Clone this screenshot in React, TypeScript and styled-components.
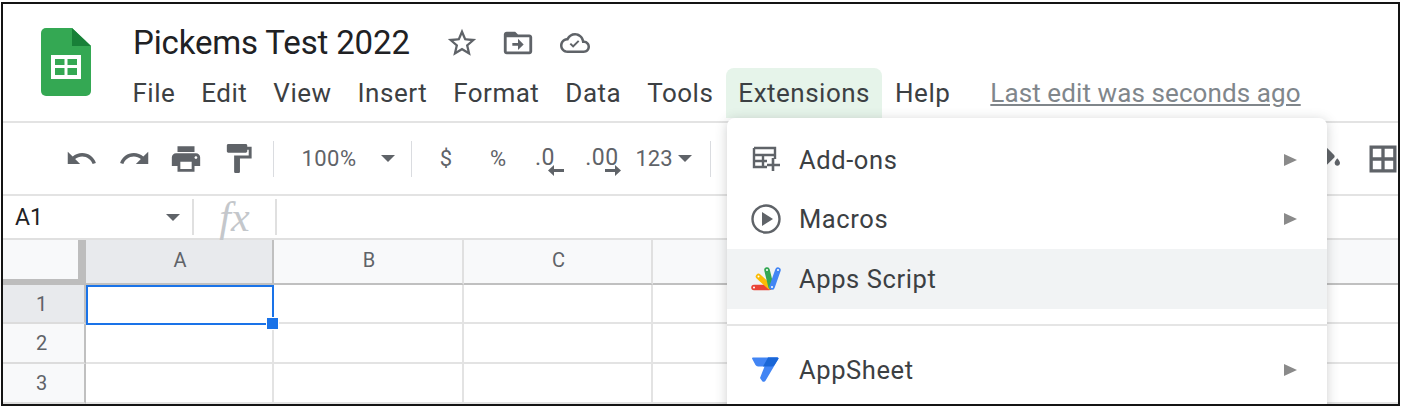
import React from 'react';
import styled, { createGlobalStyle } from 'styled-components';

const GlobalStyle = createGlobalStyle`
  html, body {
    margin: 0;
    padding: 0;
    background: #fff;
  }
  body {
    font-family: Roboto, "Liberation Sans", sans-serif;
  }
`;

const Frame = styled.div`
  position: relative;
  box-sizing: border-box;
  width: 1399px;
  height: 404px;
  margin: 2px 0 0 1px;
  border: 2px solid #141414;
  overflow: hidden;
  display: flex;
  flex-direction: column;
`;

const Header = styled.header`
  flex: none;
  height: 117px;
  box-sizing: content-box;
  display: flex;
  border-bottom: 2px solid #e3e3e3;
`;

const LogoSlot = styled.div`
  flex: none;
  width: 87px;
  padding: 24px 0 0 38px;
  box-sizing: content-box;
`;

const TitleColumn = styled.div`
  display: flex;
  flex-direction: column;
`;

const TitleRow = styled.div`
  display: flex;
  align-items: center;
  box-sizing: border-box;
  height: 62px;
  padding: 15px 0 0 5px;
`;

const DocTitle = styled.div`
  font-size: 33px;
  letter-spacing: -0.15px;
  color: #202124;
  width: 312px;
  white-space: nowrap;
`;

const TitleIcons = styled.div`
  display: flex;
  align-items: center;
  gap: 22px;
  color: #5f6368;

  svg:last-child {
    margin-left: 3px;
  }
`;

const MenuBar = styled.nav`
  display: flex;
  align-items: center;
  height: 50px;
  margin-left: -8.5px;
  margin-top: 2px;
`;

const MenuLabel = styled.div<{ $open?: boolean }>`
  height: 50px;
  line-height: 50px;
  padding: 0 12px;
  margin: 0 ${p => (p.$open ? '0' : '1')}px;
  font-size: 26px;
  letter-spacing: 0.5px;
  color: #3c4043;
  white-space: nowrap;
  border-radius: 8px 8px 0 0;
  background: ${p => (p.$open ? '#e6f4ea' : 'transparent')};
`;

const LastEdit = styled.div`
  margin-left: 27px;
  font-size: 26px;
  letter-spacing: 0.1px;
  color: #80868b;
  text-decoration: underline;
  white-space: nowrap;
`;

const Toolbar = styled.div`
  flex: none;
  height: 71px;
  display: flex;
  align-items: center;
  padding-left: 60px;
  border-bottom: 2px solid #e3e3e3;
  color: #5f6368;
`;

const Tool = styled.div<{ $w: number }>`
  flex: none;
  width: ${p => p.$w}px;
  display: flex;
  align-items: center;
  justify-content: center;
  gap: 5px;
  font-size: 22px;
  color: #5f6368;
`;

const ToolDivider = styled.div`
  flex: none;
  width: 1px;
  height: 36px;
  background: #dadce0;
`;

const ZoomValue = styled(Tool)`
  letter-spacing: 0.5px;
`;

const Decimal = styled.div`
  position: relative;
  font-size: 23px;
  line-height: 26px;
  height: 26px;
  letter-spacing: 0.5px;
  margin-top: -2px;
`;

const DecimalArrow = styled.svg<{ $right?: boolean }>`
  position: absolute;
  top: 19px;
  ${p => (p.$right ? 'right: -2px;' : 'right: -9px;')}
`;

const ToolbarEnd = styled.div`
  margin-left: auto;
  margin-right: -3px;
  display: flex;
  align-items: center;
  gap: 21px;
  color: #5f6368;
`;

const FormulaBar = styled.div`
  flex: none;
  height: 42px;
  display: flex;
  align-items: center;
  border-bottom: 2px solid #e0e0e0;
`;

const CellName = styled.div`
  flex: none;
  width: 189px;
  padding: 0 12px;
  box-sizing: border-box;
  display: flex;
  align-items: center;
  justify-content: space-between;
  font-size: 23px;
  color: #202124;
`;

const Caret = styled.span<{ $size?: number }>`
  display: inline-block;
  width: 0;
  height: 0;
  border-left: ${p => p.$size ?? 7}px solid transparent;
  border-right: ${p => p.$size ?? 7}px solid transparent;
  border-top: ${p => p.$size ?? 7}px solid #5f6368;
`;

const FormulaDivider = styled.div`
  flex: none;
  width: 2px;
  height: 36px;
  background: #e0e0e0;
`;

const Fx = styled.div`
  flex: none;
  width: 81px;
  text-align: center;
  font-family: "Liberation Serif", serif;
  font-style: italic;
  font-size: 42px;
  line-height: 36px;
  color: #c4c7cb;
`;

const Sheet = styled.div`
  flex: 1;
  display: grid;
  grid-template-columns: 83px 188px 190px 189px 189px 189px 189px 189px;
  grid-template-rows: 45px 39px 40px 40px;
  overflow: hidden;
`;

const Corner = styled.div`
  background: #f8f9fa;
  border-right: 8px solid #bdbdbd;
  border-bottom: 6px solid #bdbdbd;
  box-sizing: border-box;
`;

const ColumnHead = styled.div<{ $active?: boolean }>`
  display: flex;
  align-items: center;
  justify-content: center;
  box-sizing: border-box;
  padding: 0 0 4px 2px;
  font-size: 20px;
  color: #5f6368;
  background: ${p => (p.$active ? '#e8eaed' : '#f8f9fa')};
  border-right: 2px solid ${p => (p.$active ? '#c0c0c0' : '#e0e0e0')};
  border-bottom: 2px solid #c0c0c0;
`;

const RowHead = styled.div<{ $active?: boolean }>`
  display: flex;
  align-items: center;
  justify-content: center;
  box-sizing: border-box;
  padding-right: 4px;
  font-size: 20px;
  color: #5f6368;
  background: ${p => (p.$active ? '#e8eaed' : '#f8f9fa')};
  border-right: 2px solid #c0c0c0;
  border-bottom: 2px solid #dcdcdc;
`;

const Cell = styled.div`
  box-sizing: border-box;
  background: #fff;
  border-right: 2px solid #e3e3e3;
  border-bottom: 2px solid #e3e3e3;
`;

const ActiveCell = styled(Cell)`
  position: relative;
  border: 2px solid #1a73e8;
  margin-bottom: -1px;

  &::after {
    content: '';
    position: absolute;
    right: -7px;
    bottom: -7px;
    width: 11px;
    height: 11px;
    background: #1a73e8;
    border: 1px solid #fff;
  }
`;

const Dropdown = styled.div`
  position: absolute;
  left: 724px;
  top: 114px;
  width: 600px;
  height: 300px;
  padding-top: 12px;
  box-sizing: border-box;
  background: #fff;
  border-radius: 8px 8px 0 0;
  box-shadow: 0 2px 12px rgba(60, 64, 67, 0.25);
`;

const DropdownItem = styled.div<{ $hover?: boolean }>`
  height: 59.5px;
  display: flex;
  align-items: center;
  padding: 0 30px 0 24px;
  background: ${p => (p.$hover ? '#f1f3f4' : 'transparent')};
`;

const ItemIcon = styled.div`
  flex: none;
  width: 48px;
  display: flex;
  align-items: center;
  color: #5f6368;
`;

const ItemLabel = styled.div`
  flex: 1;
  font-size: 25.5px;
  letter-spacing: 0.6px;
  color: #3c4043;
`;

const SubArrow = styled.span`
  width: 0;
  height: 0;
  border-top: 6px solid transparent;
  border-bottom: 6px solid transparent;
  border-left: 13px solid #8a8a8a;
`;

const Separator = styled.div`
  height: 2px;
  margin: 15px 0;
  background: #e5e5e5;
`;

const Icon = ({ d, size = 32 }: { d: string; size?: number }) => (
  <svg width={size} height={size} viewBox='0 0 24 24' fill='currentColor'>
    <path d={d} />
  </svg>
);

const SheetsLogo = () => (
  <svg width='50' height='68' viewBox='0 0 50 68'>
    <path d='M31 0H5a5 5 0 0 0-5 5v58a5 5 0 0 0 5 5h40a5 5 0 0 0 5-5V18L31 0z' fill='#34a853' />
    <path d='M31 0v18h19L31 0z' fill='#188038' />
    <path d='M10 27h30v24H10z' fill='#fff' />
    <path d='M14 31h9.500v6H14zM26.500 31H36v6h-9.500zM14 40h9.500v7H14zM26.500 40H36v7h-9.500z' fill='#34a853' />
  </svg>
);

const AddonsIcon = () => (
  <svg width='30' height='28' viewBox='0 0 30 28' fill='none' stroke='currentColor' strokeWidth='2.4'>
    <path d='M3 2h21v11M3 2v19h13M3 9h21M3 15h13M12 9v12' />
    <path d='M22 13v13M16 20h13' strokeWidth='2.6' transform='translate(0 -1)' />
  </svg>
);

const MacroIcon = () => (
  <svg width='30' height='30' viewBox='0 0 30 30'>
    <circle cx='15' cy='15' r='13.500' fill='none' stroke='currentColor' strokeWidth='2.4' />
    <path d='M11 8l11 7-11 7z' fill='currentColor' />
  </svg>
);

const AppsScriptIcon = () => (
  <svg width='30' height='26' viewBox='0 0 30 26' fill='none' strokeLinecap='round'>
    <path d='M3 21.500h15' stroke='#ea4335' strokeWidth='5.500' />
    <path d='M7.500 10.500l11 10' stroke='#fbbc04' strokeWidth='5.500' />
    <path d='M16 4l4 16.500' stroke='#34a853' strokeWidth='5.500' />
    <path d='M27 4l-6 17' stroke='#4285f4' strokeWidth='5.500' />
    <circle cx='3' cy='21.500' r='1' fill='#fff' />
    <circle cx='7.500' cy='10.500' r='1' fill='#fff' />
    <circle cx='16' cy='4' r='1' fill='#fff' />
    <circle cx='27' cy='4' r='1' fill='#fff' />
    <circle cx='21' cy='21' r='1' fill='#fff' />
  </svg>
);

const AppSheetIcon = () => (
  <svg width='28' height='26' viewBox='0 0 28 26'>
    <path d='M1 1.500a1 1 0 0 1 1-1h24a1 1 0 0 1 .8 1.600l-3.800 6a3 3 0 0 1-2.500 1.400H7a3 3 0 0 1-2.500-1.400z' fill='#4285f4' />
    <path d='M17 .5h9.500a1 1 0 0 1 .8 1.600L14.500 23.800a2 2 0 0 1-3.400.2L9 21z' fill='#4285f4' />
    <path d='M17 .5h9.500a1 1 0 0 1 .8 1.600l-3.800 6a3 3 0 0 1-2.500 1.400H12z' fill='#1a66d6' />
  </svg>
);

const paths = {
  star: 'M22 9.240l-7.190-.62L12 2 9.190 8.630 2 9.240l5.460 4.730L5.820 21 12 17.270 18.180 21l-1.630-7.030L22 9.240zM12 15.400l-3.760 2.270 1-4.280-3.320-2.880 4.380-.38L12 6.100l1.710 4.040 4.380.38-3.320 2.880 1 4.280L12 15.400z',
  move: 'M20 6h-8l-2-2H4c-1.100 0-2 .9-2 2v12c0 1.100.9 2 2 2h16c1.100 0 2-.9 2-2V8c0-1.100-.9-2-2-2zm0 12H4V8h16v10zm-8-1l4-4-4-4v3H8v2h4v3z',
  cloud: 'M19.350 10.040C18.670 6.590 15.640 4 12 4 9.110 4 6.600 5.640 5.350 8.040 2.340 8.360 0 10.910 0 14c0 3.310 2.690 6 6 6h13c2.760 0 5-2.240 5-5 0-2.640-2.050-4.780-4.650-4.960zM19 18H6c-2.210 0-4-1.790-4-4 0-2.050 1.530-3.760 3.560-3.970l1.070-.11.500-.95C8.080 7.140 9.940 6 12 6c2.620 0 4.880 1.860 5.390 4.430l.3 1.500 1.530.11c1.560.1 2.780 1.410 2.780 2.960 0 1.650-1.350 3-3 3zm-8.500-2.200l-2.800-2.800 1.100-1.100 1.700 1.700 3.900-3.900 1.100 1.100z',
  undo: 'M12.500 8c-2.650 0-5.050.99-6.900 2.600L2 7v9h9l-3.620-3.620c1.390-1.160 3.160-1.880 5.120-1.880 3.540 0 6.550 2.310 7.600 5.500l2.370-.78C21.080 11.030 17.150 8 12.500 8z',
  redo: 'M18.400 10.600C16.550 8.990 14.150 8 11.500 8c-4.650 0-8.580 3.030-9.960 7.220L3.900 16c1.050-3.190 4.050-5.500 7.600-5.500 1.950 0 3.730.72 5.120 1.880L13 16h9V7l-3.600 3.600z',
  print: 'M19 8H5c-1.660 0-3 1.340-3 3v6h4v4h12v-4h4v-6c0-1.660-1.340-3-3-3zm-3 11H8v-5h8v5zm3-7c-.55 0-1-.45-1-1s.45-1 1-1 1 .45 1 1-.45 1-1 1zm-1-9H6v4h12V3z',
  paint: 'M18 4V3c0-.55-.45-1-1-1H5c-.55 0-1 .45-1 1v4c0 .55.45 1 1 1h12c.55 0 1-.45 1-1V6h1v4H9v11c0 .55.45 1 1 1h2c.55 0 1-.45 1-1v-9h8V4h-3z',
  fill: 'M16.560 8.940L7.620 0 6.210 1.410l2.380 2.380-5.150 5.150c-.59.59-.59 1.540 0 2.120l5.500 5.500c.29.29.68.44 1.060.44s.77-.15 1.060-.44l5.500-5.500c.59-.58.59-1.530 0-2.120zM19 11.500s-2 2.170-2 3.500c0 1.100.9 2 2 2s2-.9 2-2c0-1.330-2-3.500-2-3.500z',
  borders: 'M3 3v18h18V3H3zm7.900 15.800H5.200v-5.700h5.700v5.700zm0-7.900H5.200V5.200h5.700v5.700zm7.900 7.900h-5.700v-5.700h5.700v5.700zm0-7.900h-5.700V5.200h5.700v5.700z',
};

const menus = ['File', 'Edit', 'View', 'Insert', 'Format', 'Data', 'Tools'];
// columns past C sit behind the open menu, so their letters are never seen
const columns = ['A', 'B', 'C', '', '', '', ''];

export default function App () {
  return (
    <>
      <GlobalStyle />
      <Frame>
        <Header>
          <LogoSlot>
            <SheetsLogo />
          </LogoSlot>
          <TitleColumn>
            <TitleRow>
              <DocTitle>Pickems Test 2022</DocTitle>
              <TitleIcons>
                <Icon d={paths.star} size={34} />
                <Icon d={paths.move} size={34} />
                <Icon d={paths.cloud} size={30} />
              </TitleIcons>
            </TitleRow>
            <MenuBar>
              {menus.map(m => <MenuLabel key={m}>{m}</MenuLabel>)}
              <MenuLabel $open>Extensions</MenuLabel>
              <MenuLabel>Help</MenuLabel>
              <LastEdit>Last edit was seconds ago</LastEdit>
            </MenuBar>
          </TitleColumn>
        </Header>

        <Toolbar>
          <Tool $w={36}><Icon d={paths.undo} size={33} /></Tool>
          <Tool $w={70}><Icon d={paths.redo} size={33} /></Tool>
          <Tool $w={34}><Icon d={paths.print} size={36} /></Tool>
          <Tool $w={70}><Icon d={paths.paint} size={35} /></Tool>
          <ToolDivider />
          <Tool $w={7} />
          <ZoomValue $w={96}>100%</ZoomValue>
          <Tool $w={22}><Caret /></Tool>
          <Tool $w={12} />
          <ToolDivider />
          <Tool $w={68}>$</Tool>
          <Tool $w={36}>%</Tool>
          <Tool $w={58}>
            <Decimal>
              .0
              <DecimalArrow width='16' height='14' viewBox='0 0 16 14' fill='currentColor'>
                <path d='M6 1v4h10v3H6v4L0 6.500z' />
              </DecimalArrow>
            </Decimal>
          </Tool>
          <Tool $w={56}>
            <Decimal>
              .00
              <DecimalArrow $right width='16' height='14' viewBox='0 0 16 14' fill='currentColor'>
                <path d='M10 1v4H0v3h10v4l6-5.500z' />
              </DecimalArrow>
            </Decimal>
          </Tool>
          <Tool $w={67}>123<Caret /></Tool>
          <Tool $w={13} />
          <ToolDivider />
          <ToolbarEnd>
            <Icon d={paths.fill} />
            <Icon d={paths.borders} size={36} />
          </ToolbarEnd>
        </Toolbar>

        <FormulaBar>
          <CellName>A1<Caret /></CellName>
          <FormulaDivider />
          <Fx>fx</Fx>
          <FormulaDivider />
        </FormulaBar>

        <Sheet>
          <Corner />
          {columns.map((c, i) => <ColumnHead key={i} $active={i === 0}>{c}</ColumnHead>)}
          {[1, 2, 3].map(row => (
            <React.Fragment key={row}>
              <RowHead $active={row === 1}>{row}</RowHead>
              {columns.map((c, i) => (row === 1 && i === 0
                ? <ActiveCell key={i} />
                : <Cell key={i} />))}
            </React.Fragment>
          ))}
        </Sheet>

        <Dropdown>
          <DropdownItem>
            <ItemIcon><AddonsIcon /></ItemIcon>
            <ItemLabel>Add-ons</ItemLabel>
            <SubArrow />
          </DropdownItem>
          <DropdownItem>
            <ItemIcon><MacroIcon /></ItemIcon>
            <ItemLabel>Macros</ItemLabel>
            <SubArrow />
          </DropdownItem>
          <DropdownItem $hover>
            <ItemIcon><AppsScriptIcon /></ItemIcon>
            <ItemLabel>Apps Script</ItemLabel>
          </DropdownItem>
          <Separator />
          <DropdownItem>
            <ItemIcon><AppSheetIcon /></ItemIcon>
            <ItemLabel>AppSheet</ItemLabel>
            <SubArrow />
          </DropdownItem>
        </Dropdown>
      </Frame>
    </>
  );
}
